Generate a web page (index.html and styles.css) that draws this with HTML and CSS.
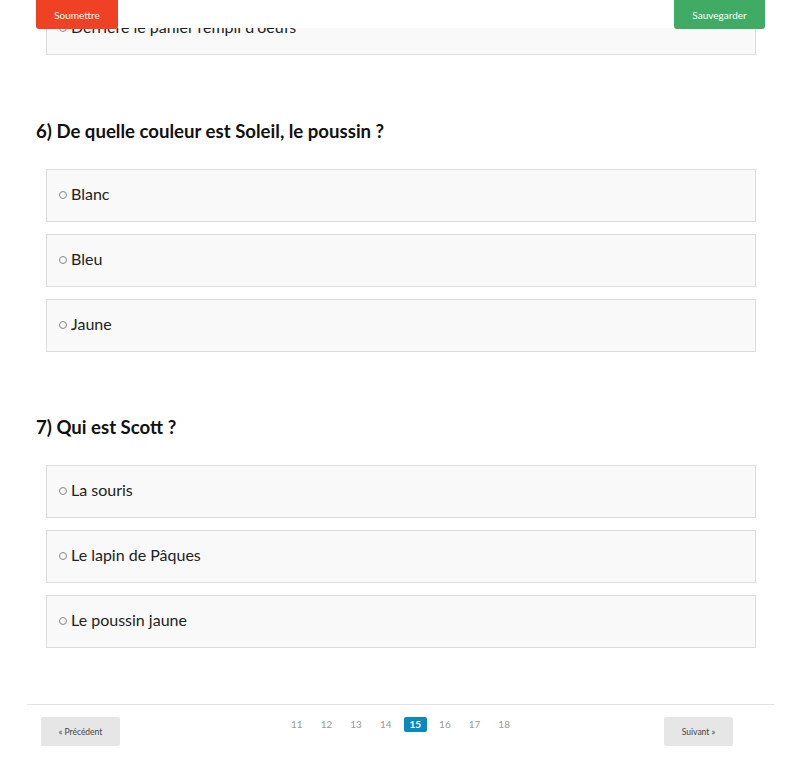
FILE: index.html
```html
<!DOCTYPE html>
<html lang="fr">
<head>
    <meta charset="UTF-8">
    <meta name="viewport" content="width=device-width, initial-scale=1.0">
    <title>Quiz</title>
    <link rel="stylesheet" href="styles.css">
</head>
<body>
    <div class="topbar">
        <button class="btn-submit">Soumettre</button>
        <button class="btn-save">Sauvegarder</button>
    </div>

    <div class="quiz">
        <div class="question first">
            <div class="options">
                <label class="option"><span class="radio"></span>Derrière le panier rempli d'oeufs</label>
            </div>
        </div>

        <div class="question">
            <h3>6) De quelle couleur est Soleil, le poussin ?</h3>
            <div class="options">
                <label class="option"><span class="radio"></span>Blanc</label>
                <label class="option"><span class="radio"></span>Bleu</label>
                <label class="option"><span class="radio"></span>Jaune</label>
            </div>
        </div>

        <div class="question">
            <h3>7) Qui est Scott ?</h3>
            <div class="options">
                <label class="option"><span class="radio"></span>La souris</label>
                <label class="option"><span class="radio"></span>Le lapin de Pâques</label>
                <label class="option"><span class="radio"></span>Le poussin jaune</label>
            </div>
        </div>
    </div>

    <div class="pager">
        <button class="pager-btn prev">« Précédent</button>
        <div class="pages">
            <span class="page">11</span>
            <span class="page">12</span>
            <span class="page">13</span>
            <span class="page">14</span>
            <span class="page active">15</span>
            <span class="page">16</span>
            <span class="page">17</span>
            <span class="page">18</span>
        </div>
        <button class="pager-btn next">Suivant »</button>
    </div>
</body>
</html>
```

FILE: styles.css
```css
body {
    margin: 0;
    font-family: Lato, 'Open Sans', sans-serif;
    color: #222;
    background-color: #fff;
}
.topbar {
    position: fixed;
    top: 0;
    left: 0;
    right: 0;
    height: 28px;
    background-color: #fff;
    display: flex;
    justify-content: space-between;
    padding: 0 35px 0 36px;
    z-index: 10;
}
.topbar button {
    border: none;
    color: white;
    font-family: Lato, sans-serif;
    font-size: 10px;
    height: 29px;
    border-radius: 0 0 3px 3px;
    cursor: pointer;
}
.btn-submit {
    background-color: #ef4123;
    width: 82px;
}
.btn-save {
    background-color: #3fab65;
    width: 91px;
}
.quiz {
    padding: 0 44px 0 36px;
}
.question {
    margin-top: 63px;
}
.question.first {
    margin-top: 2px;
}
.question.first + .question {
    margin-top: 64px;
}
h3 {
    margin: 0 0 26px;
    font-size: 18.6px;
    line-height: 24px;
    font-weight: 700;
    color: #111;
}
.options {
    padding-left: 10px;
}
.option {
    display: flex;
    align-items: center;
    background-color: #f9f9f9;
    border: 1px solid #dcdcdc;
    padding: 14px 12px 17px;
    line-height: 20px;
    font-size: 16px;
    margin-bottom: 12px;
    cursor: pointer;
}
.radio {
    width: 6px;
    height: 6px;
    border: 1px solid #888;
    border-radius: 50%;
    margin-right: 4px;
    margin-top: 1px;
}
.pager {
    margin: 56px 26px 0 27px;
    border-top: 1px solid #e4e4e4;
    padding-top: 12px;
    display: grid;
    grid-template-columns: 1fr auto 1fr;
    align-items: start;
}
.pager-btn {
    background-color: #e6e6e6;
    border: none;
    border-radius: 2px;
    height: 29px;
    font-family: Lato, sans-serif;
    font-size: 8.5px;
    color: #444;
    cursor: pointer;
}
.prev {
    justify-self: start;
    width: 79px;
    margin-left: 14px;
}
.next {
    justify-self: end;
    width: 69px;
    margin-right: 41px;
}
.pages {
    display: flex;
    gap: 6px;
}
.page {
    font-size: 10px;
    color: #999;
    padding: 1px 6px;
    line-height: 13px;
    border-radius: 2px;
}
.page.active {
    background-color: #0a89bd;
    color: white;
    font-weight: 700;
}
```
